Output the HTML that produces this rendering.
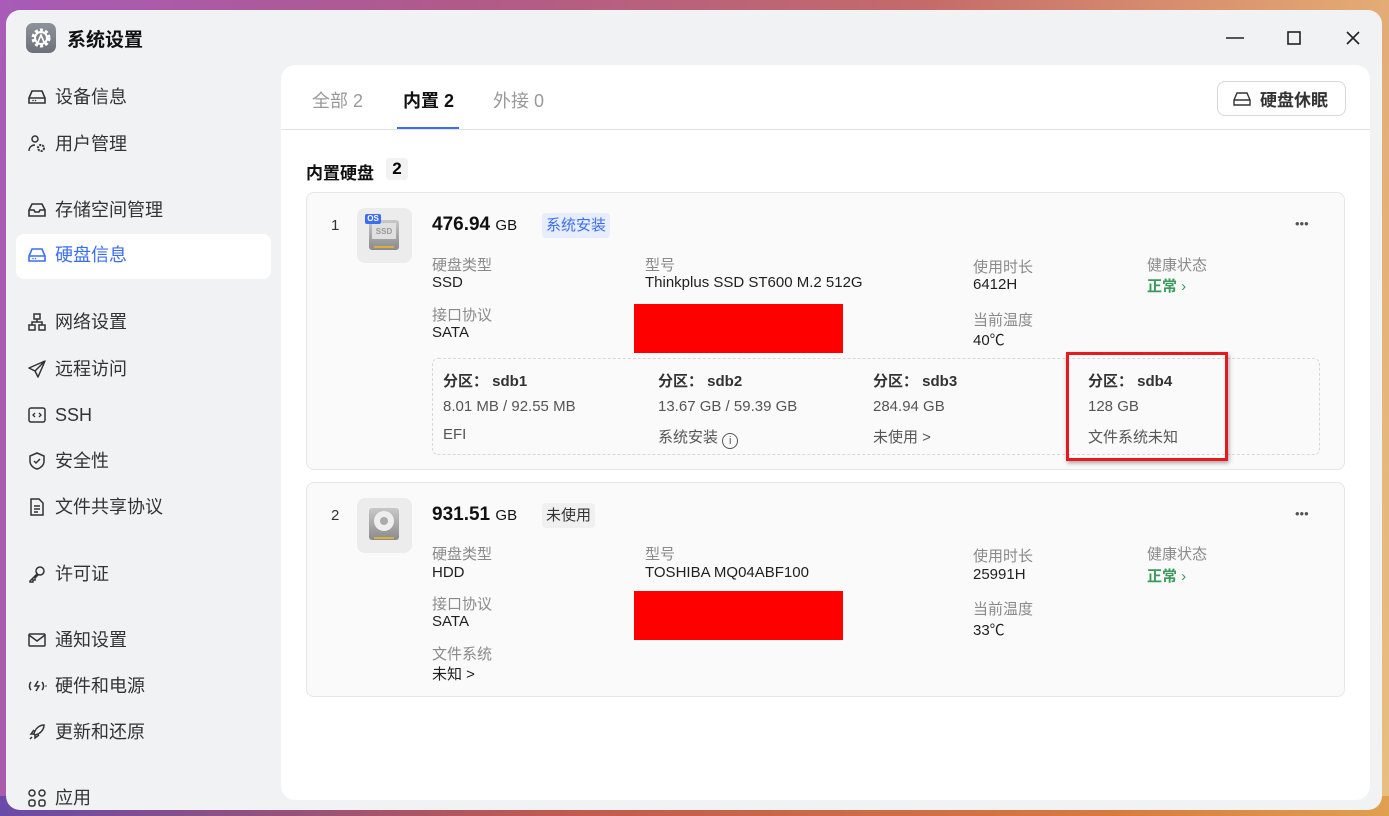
<!DOCTYPE html>
<html><head><meta charset="utf-8"><style>
*{margin:0;padding:0;box-sizing:border-box}
body{width:1389px;height:816px;overflow:hidden;position:relative;font-family:"Liberation Sans","Noto Sans CJK SC",sans-serif;background:linear-gradient(100deg,#a85bb8 0%,#b05a8a 30%,#c46a6a 60%,#e0a070 85%,#e8c080 100%);}
.bgb{position:absolute;left:0;right:0;bottom:0;height:20px;background:linear-gradient(90deg,#6a4aa8,#c05a50 40%,#d87a40 80%,#e0a050)}
.win{position:absolute;left:6px;top:10px;width:1376px;height:800px;background:#f1f2f4;border-radius:14px;overflow:hidden}
.a{position:absolute;white-space:nowrap}
.nav{position:absolute;left:49px;font-size:18px;color:#333;line-height:20px}
.ic{position:absolute;left:21px;width:20px;height:20px}
.panel{position:absolute;left:275px;top:55px;width:1089px;height:735px;background:#fff;border-radius:14px}
.card{position:absolute;left:25px;width:1039px;background:#fafafa;border:1px solid #e6e6e6;border-radius:8px}
.lb{position:absolute;font-size:15px;color:#8a8a8a}
.vl{position:absolute;font-size:15px;color:#1f1f1f}
.red{position:absolute;background:#ff0000}
</style></head><body>
<div class="bgb"></div>
<div class="win">
 <div class="a" style="left:20px;top:13px;width:30px;height:30px;border-radius:7px;background:linear-gradient(#8e939b,#6b7079)">
  <svg width="30" height="30" viewBox="0 0 30 30"><circle cx="15" cy="15" r="8" fill="none" stroke="#fff" stroke-width="3" stroke-dasharray="3 2.2"/><circle cx="15" cy="15" r="6" fill="none" stroke="#fff" stroke-width="2"/><path d="M12 19l3-7 3 7" stroke="#fff" stroke-width="1.6" fill="none"/></svg>
 </div>
 <div class="a" style="left:61px;top:15px;font-size:19px;font-weight:bold;color:#111">系统设置</div>
 <svg class="a" style="left:1218px;top:20px" width="160" height="16"><path d="M2 8h18" stroke="#222" stroke-width="1.6"/><rect x="64" y="2" width="12" height="12" fill="none" stroke="#222" stroke-width="1.6"/><path d="M123 2l12 12M135 2l-12 12" stroke="#222" stroke-width="1.6"/></svg>

 <div class="a" style="left:10px;top:224px;width:255px;height:45px;background:#fff;border-radius:8px"></div>
 <svg class="ic" style="top:77px" viewBox="0 0 20 20"><path d="M2 11l3-7h10l3 7v5H2z M2 11h16" fill="none" stroke="#333" stroke-width="1.6"/><circle cx="6" cy="13.5" r=".8" fill="#333"/><circle cx="8.5" cy="13.5" r=".8" fill="#333"/></svg>
 <div class="nav" style="top:77px">设备信息</div>
 <svg class="ic" style="top:124px" viewBox="0 0 20 20"><circle cx="8" cy="5" r="3" fill="none" stroke="#333" stroke-width="1.5"/><path d="M2 17c0-4 3-6 6-6" fill="none" stroke="#333" stroke-width="1.5"/><circle cx="14" cy="14" r="3" fill="none" stroke="#333" stroke-width="2" stroke-dasharray="2 1"/></svg>
 <div class="nav" style="top:124px">用户管理</div>
 <svg class="ic" style="top:190px" viewBox="0 0 20 20"><path d="M2 10l3-6h10l3 6v6H2z M2 10h5l1 2h4l1-2h5" fill="none" stroke="#333" stroke-width="1.6"/></svg>
 <div class="nav" style="top:190px">存储空间管理</div>
 <svg class="ic" style="top:235px" viewBox="0 0 20 20"><path d="M2 11l3-7h10l3 7v5H2z M2 11h16" fill="none" stroke="#3b6ef5" stroke-width="1.6"/><circle cx="6" cy="13.5" r=".8" fill="#3b6ef5"/><circle cx="8.5" cy="13.5" r=".8" fill="#3b6ef5"/></svg>
 <div class="nav" style="top:235px;color:#3b6ef5">硬盘信息</div>
 <svg class="ic" style="top:302px" viewBox="0 0 20 20"><rect x="7" y="2" width="6" height="5" fill="none" stroke="#333" stroke-width="1.5"/><rect x="2" y="13" width="6" height="5" fill="none" stroke="#333" stroke-width="1.5"/><rect x="12" y="13" width="6" height="5" fill="none" stroke="#333" stroke-width="1.5"/><path d="M10 7v3M5 13v-3h10v3" fill="none" stroke="#333" stroke-width="1.5"/></svg>
 <div class="nav" style="top:302px">网络设置</div>
 <svg class="ic" style="top:349px" viewBox="0 0 20 20"><path d="M18 2L2 9l6 3 3 6z M8 12l10-10" fill="none" stroke="#333" stroke-width="1.5" stroke-linejoin="round"/></svg>
 <div class="nav" style="top:349px">远程访问</div>
 <svg class="ic" style="top:395px" viewBox="0 0 20 20"><rect x="2" y="3" width="16" height="14" rx="2" fill="none" stroke="#333" stroke-width="1.5"/><path d="M8 8l-2 2 2 2M12 8l2 2-2 2" fill="none" stroke="#333" stroke-width="1.3"/></svg>
 <div class="nav" style="top:395px">SSH</div>
 <svg class="ic" style="top:441px" viewBox="0 0 20 20"><path d="M10 2l7 3v5c0 4-3 7-7 8-4-1-7-4-7-8V5z M7 10l2 2 4-4" fill="none" stroke="#333" stroke-width="1.5"/></svg>
 <div class="nav" style="top:441px">安全性</div>
 <svg class="ic" style="top:487px" viewBox="0 0 20 20"><path d="M4 2h8l4 4v12H4z M7 9h6M7 12h6M7 15h4" fill="none" stroke="#333" stroke-width="1.5"/></svg>
 <div class="nav" style="top:487px">文件共享协议</div>
 <svg class="ic" style="top:554px" viewBox="0 0 20 20"><circle cx="13" cy="7" r="4" fill="none" stroke="#333" stroke-width="1.5"/><path d="M10 10l-7 7v1h3v-2h2v-2l3-3" fill="none" stroke="#333" stroke-width="1.5"/></svg>
 <div class="nav" style="top:554px">许可证</div>
 <svg class="ic" style="top:620px" viewBox="0 0 20 20"><rect x="2" y="4" width="16" height="12" rx="1" fill="none" stroke="#333" stroke-width="1.5"/><path d="M2 5l8 6 8-6" fill="none" stroke="#333" stroke-width="1.5"/></svg>
 <div class="nav" style="top:620px">通知设置</div>
 <svg class="ic" style="top:666px" viewBox="0 0 20 20"><path d="M4 6c-2 2-2 6 0 8M15 6c2 2 2 6 0 8M11 5l-3 5h4l-3 5" fill="none" stroke="#333" stroke-width="1.5"/><circle cx="19" cy="10" r=".8" fill="#333"/></svg>
 <div class="nav" style="top:666px">硬件和电源</div>
 <svg class="ic" style="top:712px" viewBox="0 0 20 20"><path d="M17 3c-5 0-9 4-10 9l1 1c5-1 9-5 9-10z M7 12l-3 0 3-4M8 13l0 3 4-3M5 15l-2 2" fill="none" stroke="#333" stroke-width="1.5"/></svg>
 <div class="nav" style="top:712px">更新和还原</div>
 <svg class="ic" style="top:778px" viewBox="0 0 20 20"><circle cx="5" cy="5" r="3" fill="none" stroke="#333" stroke-width="1.5"/><circle cx="15" cy="5" r="3" fill="none" stroke="#333" stroke-width="1.5"/><rect x="2" y="12" width="6" height="6" rx="2" fill="none" stroke="#333" stroke-width="1.5"/><rect x="12" y="12" width="6" height="6" rx="2" fill="none" stroke="#333" stroke-width="1.5"/></svg>
 <div class="nav" style="top:778px">应用</div>

 <div class="panel">
  <div class="a" style="left:31px;top:22px;font-size:18px;color:#999">全部 2</div>
  <div class="a" style="left:122px;top:22px;font-size:18px;color:#111;font-weight:bold">内置 2</div>
  <div class="a" style="left:116px;top:62px;width:62px;height:2px;background:#3b6ef5"></div>
  <div class="a" style="left:212px;top:22px;font-size:18px;color:#999">外接 0</div>
  <div class="a" style="left:0;top:64px;width:1089px;height:1px;background:#e2e2e2"></div>
  <div class="a" style="left:936px;top:16px;width:129px;height:35px;border:1px solid #d8d8d8;border-radius:8px"></div>
  <svg class="a" style="left:952px;top:26px" width="18" height="16" viewBox="0 0 18 16"><path d="M1 9l3-7h10l3 7v5H1z M1 9h16" fill="none" stroke="#333" stroke-width="1.4"/></svg>
  <div class="a" style="left:979px;top:21px;font-size:17px;font-weight:bold;color:#333">硬盘休眠</div>
  <div class="a" style="left:25px;top:94px;font-size:17px;font-weight:bold;color:#111">内置硬盘</div>
  <div class="a" style="left:105px;top:93px;width:22px;height:22px;background:#f2f2f2;border-radius:4px;font-size:17px;font-weight:bold;text-align:center;line-height:22px">2</div>

  <div class="card" style="top:127px;height:278px">
   <div class="a" style="left:24px;top:24px;font-size:15px;color:#333">1</div>
   <div class="a" style="left:50px;top:15px;width:55px;height:55px;background:#ececec;border-radius:8px">
    <div class="a" style="left:12px;top:12px;width:30px;height:30px;border-radius:3px;background:linear-gradient(#c8c8c8,#8a8a8a)"></div>
    <div class="a" style="left:15px;top:15px;width:24px;height:16px;background:#e0e0e0;font-size:8px;font-weight:bold;color:#999;text-align:center;line-height:18px">SSD</div>
    <div class="a" style="left:17px;top:38px;width:20px;height:2px;background:#d8b040"></div>
    <div class="a" style="left:8px;top:6px;width:16px;height:10px;background:#3b6ef5;border-radius:2px;color:#fff;font-size:8px;font-weight:bold;text-align:center;line-height:10px">OS</div>
   </div>
   <div class="a" style="left:125px;top:21px;font-size:19px;font-weight:bold;color:#111">476.94 <span style="font-size:15px;font-weight:normal">GB</span></div>
   <div class="a" style="left:235px;top:20px;height:25px;padding:0 4px;background:#e7edfc;border-radius:4px;color:#3b6ef5;font-size:15px;line-height:25px">系统安装</div>
   <div class="lb" style="left:125px;top:61px">硬盘类型</div><div class="vl" style="left:125px;top:81px">SSD</div>
   <div class="lb" style="left:125px;top:111px">接口协议</div><div class="vl" style="left:125px;top:131px">SATA</div>
   <div class="lb" style="left:338px;top:61px">型号</div><div class="vl" style="left:338px;top:81px">Thinkplus SSD ST600 M.2 512G</div>
   <div class="red" style="left:327px;top:111px;width:209px;height:49px"></div>
   <div class="lb" style="left:666px;top:63px">使用时长</div><div class="vl" style="left:666px;top:83px">6412H</div>
   <div class="lb" style="left:666px;top:116px">当前温度</div><div class="vl" style="left:666px;top:136px">40℃</div>
   <div class="lb" style="left:840px;top:61px">健康状态</div><div class="vl" style="left:840px;top:82px;color:#3a9a5a;font-weight:bold">正常 <span style="font-weight:normal">›</span></div>
   <div class="a" style="left:988px;top:23px;font-size:13px;color:#555;letter-spacing:0px">•••</div>
   <div class="a" style="left:125px;top:165px;width:888px;height:97px;border:1px dashed #d8d8d8;border-radius:6px"></div>
   <div class="vl" style="left:136px;top:177px;font-weight:bold;color:#333">分区：&nbsp;sdb1</div>
   <div class="vl" style="left:136px;top:205px;color:#555">8.01 MB / 92.55 MB</div>
   <div class="vl" style="left:136px;top:233px;color:#555">EFI</div>
   <div class="vl" style="left:351px;top:177px;font-weight:bold;color:#333">分区：&nbsp;sdb2</div>
   <div class="vl" style="left:351px;top:205px;color:#555">13.67 GB / 59.39 GB</div>
   <div class="vl" style="left:351px;top:233px;color:#555">系统安装 <span style="display:inline-block;width:16px;height:16px;border:1.3px solid #555;border-radius:50%;font-size:11px;text-align:center;line-height:14px;vertical-align:-2px">i</span></div>
   <div class="vl" style="left:566px;top:177px;font-weight:bold;color:#333">分区：&nbsp;sdb3</div>
   <div class="vl" style="left:566px;top:205px;color:#555">284.94 GB</div>
   <div class="vl" style="left:566px;top:233px;color:#555">未使用 &gt;</div>
   <div class="vl" style="left:781px;top:177px;font-weight:bold;color:#333">分区：&nbsp;sdb4</div>
   <div class="vl" style="left:781px;top:205px;color:#555">128 GB</div>
   <div class="vl" style="left:781px;top:233px;color:#555">文件系统未知</div>
   <div class="a" style="left:759px;top:159px;width:162px;height:109px;border:3px solid #e8191c;box-shadow:1px 2px 4px rgba(0,0,0,.35)"></div>
  </div>

  <div class="card" style="top:417px;height:215px">
   <div class="a" style="left:24px;top:24px;font-size:15px;color:#333">2</div>
   <div class="a" style="left:50px;top:15px;width:55px;height:55px;background:#ececec;border-radius:8px">
    <div class="a" style="left:12px;top:10px;width:30px;height:32px;border-radius:3px;background:linear-gradient(#c8c8c8,#8a8a8a)"></div>
    <div class="a" style="left:17px;top:13px;width:20px;height:20px;border-radius:50%;background:#eee"></div>
    <div class="a" style="left:23px;top:19px;width:8px;height:8px;border-radius:50%;background:#aaa"></div>
    <div class="a" style="left:17px;top:39px;width:20px;height:2px;background:#d8b040"></div>
   </div>
   <div class="a" style="left:125px;top:21px;font-size:19px;font-weight:bold;color:#111">931.51 <span style="font-size:15px;font-weight:normal">GB</span></div>
   <div class="a" style="left:235px;top:20px;height:25px;padding:0 4px;background:#f0f0f0;border-radius:4px;color:#333;font-size:15px;line-height:25px">未使用</div>
   <div class="lb" style="left:125px;top:60px">硬盘类型</div><div class="vl" style="left:125px;top:81px">HDD</div>
   <div class="lb" style="left:125px;top:110px">接口协议</div><div class="vl" style="left:125px;top:130px">SATA</div>
   <div class="lb" style="left:125px;top:160px">文件系统</div><div class="vl" style="left:125px;top:180px">未知 &gt;</div>
   <div class="lb" style="left:338px;top:60px">型号</div><div class="vl" style="left:338px;top:81px">TOSHIBA MQ04ABF100</div>
   <div class="red" style="left:327px;top:108px;width:209px;height:49px"></div>
   <div class="lb" style="left:666px;top:62px">使用时长</div><div class="vl" style="left:666px;top:83px">25991H</div>
   <div class="lb" style="left:666px;top:115px">当前温度</div><div class="vl" style="left:666px;top:136px">33℃</div>
   <div class="lb" style="left:840px;top:60px">健康状态</div><div class="vl" style="left:840px;top:82px;color:#3a9a5a;font-weight:bold">正常 <span style="font-weight:normal">›</span></div>
   <div class="a" style="left:988px;top:23px;font-size:13px;color:#555">•••</div>
  </div>
 </div>
</div>
</body></html>
